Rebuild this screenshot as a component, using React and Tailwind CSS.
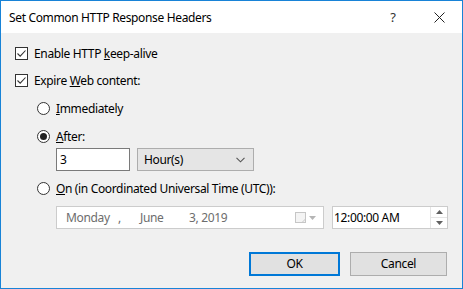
import React from 'react';

const font = { fontFamily: '"Segoe UI", "Noto Sans", sans-serif' };

const Check = () => (
  <span className="w-[13px] h-[13px] border border-[#333] bg-white flex items-center justify-center shrink-0">
    <svg width="11" height="11" viewBox="0 0 11 11">
      <path d="M1.5 5.5 L4.2 8.2 L9.5 2.5" fill="none" stroke="#333" strokeWidth="1.1" />
    </svg>
  </span>
);

const Radio = ({ on }) => (
  <span className="w-[13px] h-[13px] rounded-full border border-[#333] bg-white flex items-center justify-center shrink-0">
    {on && <span className="w-[7px] h-[7px] rounded-full bg-[#222]" />}
  </span>
);

const App = () => {
  return (
    <div className="w-[463px] h-[289px] border border-[#1883d7] flex flex-col text-[12px] tracking-[-0.35px] text-black" style={font}>
      {/* Title bar */}
      <div className="h-[32px] bg-white flex items-center pl-[8px] pt-[1px] shrink-0">
        <span className="flex-1">Set Common HTTP Response Headers</span>
        <span className="w-[46px] text-center text-[13px] text-[#333]">?</span>
        <span className="w-[46px] flex justify-center">
          <svg width="11" height="11" viewBox="0 0 11 11">
            <path d="M0.5 0.5 L10.5 10.5 M10.5 0.5 L0.5 10.5" stroke="#222" strokeWidth="1" />
          </svg>
        </span>
      </div>

      {/* Body */}
      <div className="flex-1 bg-[#f0f0f0] flex flex-col pl-[14px] pt-[14px]">
        <label className="flex items-center gap-[6px] h-[13px]">
          <Check />
          <span>Enable HTTP <u>k</u>eep-alive</span>
        </label>
        <label className="flex items-center gap-[6px] h-[13px] mt-[14px]">
          <Check />
          <span>Expire <u>W</u>eb content:</span>
        </label>

        <div className="pl-[22px] flex flex-col">
          <label className="flex items-center gap-[6px] h-[13px] mt-[15px]">
            <Radio />
            <span><u>I</u>mmediately</span>
          </label>
          <label className="flex items-center gap-[6px] h-[13px] mt-[15px]">
            <Radio on />
            <span><u>A</u>fter:</span>
          </label>
          <div className="flex gap-[7px] pl-[19px] mt-[5px]">
            <div className="w-[74px] h-[23px] bg-white border border-[#7a7a7a] flex items-center pl-[3px]">3</div>
            <div className="w-[117px] h-[23px] bg-[#e5e5e5] border border-[#adadad] flex items-center pl-[6px] pr-[8px]">
              <span className="flex-1">Hour(s)</span>
              <svg width="9" height="6" viewBox="0 0 9 6">
                <path d="M0.5 0.8 L4.5 4.8 L8.5 0.8" fill="none" stroke="#555" strokeWidth="1.1" />
              </svg>
            </div>
          </div>
          <label className="flex items-center gap-[6px] h-[13px] mt-[11px]">
            <Radio />
            <span><u>O</u>n (in Coordinated Universal Time (UTC)):</span>
          </label>
          <div className="flex gap-[8px] pl-[19px] mt-[11px]">
            <div className="w-[268px] h-[23px] bg-white border border-[#cccccc] flex items-center text-[#6d6d6d]">
              <span className="pl-[9px] w-[61px]">Monday</span>
              <span className="w-[22px]">,</span>
              <span className="w-[49px]">June</span>
              <span className="flex-1">3, 2019</span>
              <svg width="11" height="11" viewBox="0 0 11 11" className="mr-[3px]">
                <rect x="0.5" y="0.5" width="10" height="10" fill="#f4f4f4" stroke="#c6c6c6" />
                <path d="M7 10.5 L10.5 7" stroke="#c6c6c6" />
              </svg>
              <svg width="7" height="4" viewBox="0 0 7 4" className="mr-[7px]">
                <path d="M0 0 L7 0 L3.5 4 Z" fill="#b5b5b5" />
              </svg>
            </div>
            <div className="w-[116px] h-[23px] bg-white border border-[#cccccc] flex items-center pl-[1px]">
              <span className="flex-1">12:00:00 AM</span>
              <div className="w-[17px] h-full flex flex-col border-l border-[#e5e5e5]">
                <div className="flex-1 flex items-center justify-center border-b border-[#e5e5e5]">
                  <svg width="7" height="4" viewBox="0 0 7 4"><path d="M0 4 L7 4 L3.5 0 Z" fill="#606060" /></svg>
                </div>
                <div className="flex-1 flex items-center justify-center">
                  <svg width="7" height="4" viewBox="0 0 7 4"><path d="M0 0 L7 0 L3.5 4 Z" fill="#606060" /></svg>
                </div>
              </div>
            </div>
          </div>
        </div>

        <div className="flex justify-end gap-[10px] pr-[15px] mt-[23px]">
          <button className="w-[91px] h-[24px] bg-[#e1e1e1] border-2 border-[#0078d7] flex items-center justify-center">OK</button>
          <button className="w-[97px] h-[24px] bg-[#e1e1e1] border border-[#adadad] flex items-center justify-center">Cancel</button>
        </div>
      </div>
    </div>
  );
};

export default App;
